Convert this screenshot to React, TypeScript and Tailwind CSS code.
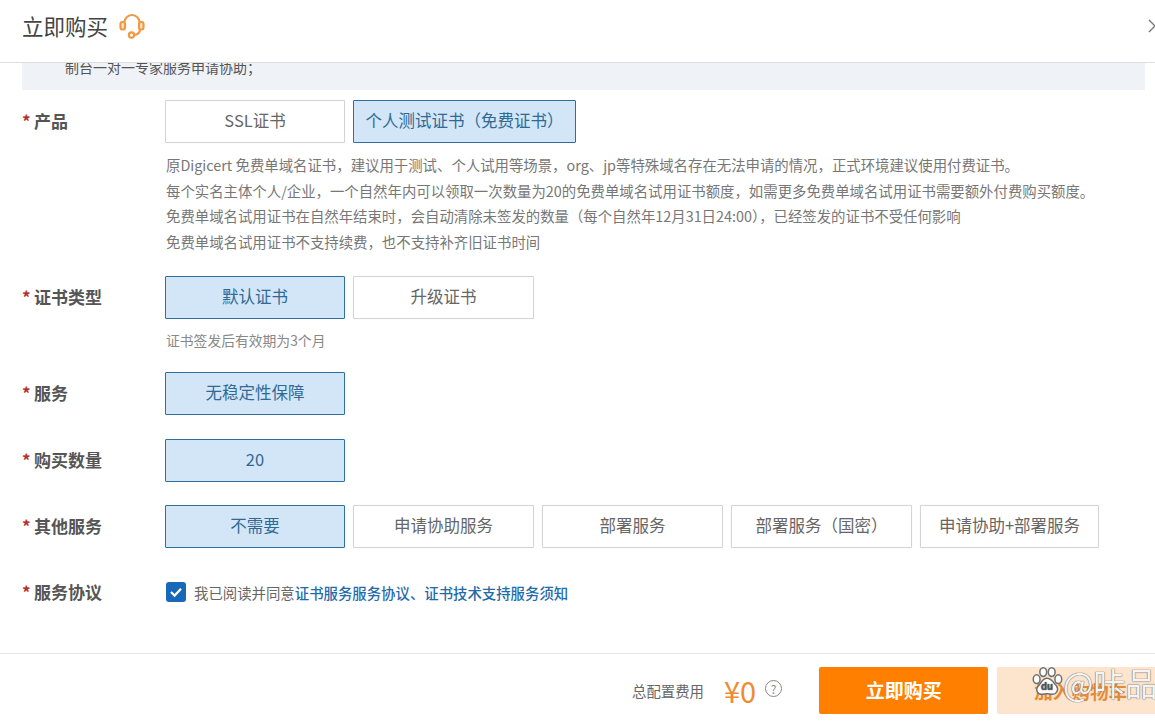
import React from 'react';

const font = { fontFamily: '"Noto Sans CJK SC", "Noto Sans", sans-serif' };

function Opt({ children, on = false, w = 'w-[180px]' }: { children: React.ReactNode; on?: boolean; w?: string }) {
  return (
    <div
      className={`${w} h-[43px] flex items-center justify-center rounded-[1px] border pb-[2px] text-[16.5px] whitespace-nowrap ${
        on
          ? 'border-[#2f6f9f] bg-[#d3e6f7] text-[#2f6a96]'
          : 'border-[#d4d4d4] bg-white text-[#666666] shadow-[0_0_1px_#dddddd]'
      }`}
    >
      {children}
    </div>
  );
}

function Row({ label, children, className = '' }: { label: string; children: React.ReactNode; className?: string }) {
  return (
    <div className={`flex pl-[22px] ${className}`}>
      <div className="w-[143px] shrink-0 h-[43px] flex items-center pb-[2px] text-[17px] font-bold text-[#555555] whitespace-nowrap">
        <span className="w-[12px] text-[#b5322c]">*</span>
        {label}
      </div>
      <div className="min-w-0 flex-1">{children}</div>
    </div>
  );
}

function Headset() {
  return (
    <svg width="28" height="26" viewBox="0 0 28 26" fill="none" stroke="#ee9a45" strokeWidth="2.2">
      <path d="M6 12 C6 5 10 2 14 2 C18 2 22 5 22 12" />
      <rect x="2.5" y="9" width="4.5" height="7.5" rx="2" fill="#fbe3c8" />
      <rect x="21" y="9" width="4.5" height="7.5" rx="2" fill="#fbe3c8" />
      <path d="M22 16 C22 20 20 21.5 16.5 22" />
      <circle cx="13.5" cy="22" r="2.6" />
    </svg>
  );
}

function Paw() {
  return (
    <svg width="32" height="32" viewBox="0 0 34 34" fill="#ffffff" stroke="#6f6f6f" strokeWidth="1.6">
      <ellipse cx="6" cy="14" rx="3.6" ry="4.6" />
      <ellipse cx="13" cy="6.5" rx="3.6" ry="4.6" />
      <ellipse cx="22" cy="6.5" rx="3.6" ry="4.6" />
      <ellipse cx="29" cy="14" rx="3.6" ry="4.6" />
      <path d="M17 13 C22 13 24 18 27 21 C30 25 27 31 22 30 C19 29.5 15 29.5 12 30 C7 31 4 25 8 21 C11 18 12 13 17 13 Z" />
      <text x="17" y="26" textAnchor="middle" fontSize="10" fontWeight="700" fill="#555555" stroke="none">du</text>
    </svg>
  );
}

export default function App() {
  return (
    <div className="relative h-[722px] w-[1155px] overflow-hidden bg-white" style={font}>
      <div className="flex h-[63px] items-center border-b border-[#dedede] pl-[22px] pb-[11px]">
        <span className="text-[21.5px] leading-none text-[#444444]">立即购买</span>
        <span className="ml-[10px] flex"><Headset /></span>
        <svg className="ml-auto" width="7" height="16" viewBox="0 0 7 16" fill="none" stroke="#777777" strokeWidth="1.4">
          <path d="M1 2 L7 8 L1 14" />
        </svg>
      </div>

      <div className="h-[590px]">
        <div className="ml-[22px] mr-[10px] h-[27px] overflow-hidden bg-[#eff2f7] pl-[43px] text-[14px] leading-[8px] text-[#555555]">
          制台一对一专家服务申请协助；
        </div>

        <Row label="产品" className="mt-[10px]">
          <div className="flex gap-2">
            <Opt>SSL证书</Opt>
            <Opt on w="w-[223px]">个人测试证书（免费证书）</Opt>
          </div>
          <div className="mt-[9px] pl-px text-[14.4px] leading-[25.7px] text-[#777777] whitespace-nowrap">
            <p>原Digicert 免费单域名证书，建议用于测试、个人试用等场景，org、jp等特殊域名存在无法申请的情况，正式环境建议使用付费证书。</p>
            <p>每个实名主体个人/企业，一个自然年内可以领取一次数量为20的免费单域名试用证书额度，如需更多免费单域名试用证书需要额外付费购买额度。</p>
            <p>免费单域名试用证书在自然年结束时，会自动清除未签发的数量（每个自然年12月31日24:00），已经签发的证书不受任何影响</p>
            <p>免费单域名试用证书不支持续费，也不支持补齐旧证书时间</p>
          </div>
        </Row>

        <Row label="证书类型" className="mt-[21px]">
          <div className="flex gap-2">
            <Opt on>默认证书</Opt>
            <Opt w="w-[181px]">升级证书</Opt>
          </div>
          <p className="mt-[9px] pl-px text-[13.8px] leading-[24px] text-[#888888]">证书签发后有效期为3个月</p>
        </Row>

        <Row label="服务" className="mt-[20px]">
          <Opt on>无稳定性保障</Opt>
        </Row>

        <Row label="购买数量" className="mt-[24px]">
          <Opt on>20</Opt>
        </Row>

        <Row label="其他服务" className="mt-[23px]">
          <div className="flex gap-2">
            <Opt on>不需要</Opt>
            <Opt w="w-[181px]">申请协助服务</Opt>
            <Opt w="w-[181px]">部署服务</Opt>
            <Opt w="w-[181px]">部署服务（国密）</Opt>
            <Opt w="w-[179px]">申请协助+部署服务</Opt>
          </div>
        </Row>

        <Row label="服务协议" className="mt-[23px]">
          <div className="flex h-[43px] items-center pl-px text-[14.4px] text-[#666666]">
            <svg width="20" height="20" viewBox="0 0 20 20" className="mr-[8px] shrink-0">
              <rect width="20" height="20" rx="3" fill="#1769b8" />
              <path d="M5 10 L8.6 13.6 L15 6.8" fill="none" stroke="#ffffff" strokeWidth="2.2" />
            </svg>
            我已阅读并同意<span className="font-medium text-[#1f6bab]">证书服务服务协议、证书技术支持服务须知</span>
          </div>
        </Row>
      </div>

      <div className="flex h-[69px] items-center border-t border-[#e6e6e6] pt-[5px] pl-[632px]">
        <span className="whitespace-nowrap text-[14.4px] text-[#666666]">总配置费用</span>
        <span className="ml-[20px] text-[29px] leading-none text-[#f08a30]">¥0</span>
        <span className="ml-[9px] mb-[4px] flex h-[17px] w-[17px] shrink-0 items-center justify-center rounded-full border border-[#888888] text-[12px] leading-none text-[#888888]">?</span>
        <button className="ml-[37px] h-[47px] w-[169px] shrink-0 rounded-[2px] bg-[#ff8000] text-[19px] font-bold text-white">立即购买</button>
        <button className="ml-[9px] h-[47px] w-[169px] shrink-0 rounded-[2px] bg-[#fde4cc] pl-[37px] text-left text-[18.6px] font-bold text-[#e58a36] whitespace-nowrap">加入购物车</button>
      </div>

      <div className="absolute left-[1031px] top-[666px] flex items-center text-[32px] leading-none text-[#f4f4f4] [text-shadow:0_0_1px_#666666,0_0_1px_#666666]">
        <Paw />
        <span className="whitespace-nowrap">@咔品</span>
      </div>
    </div>
  );
}
